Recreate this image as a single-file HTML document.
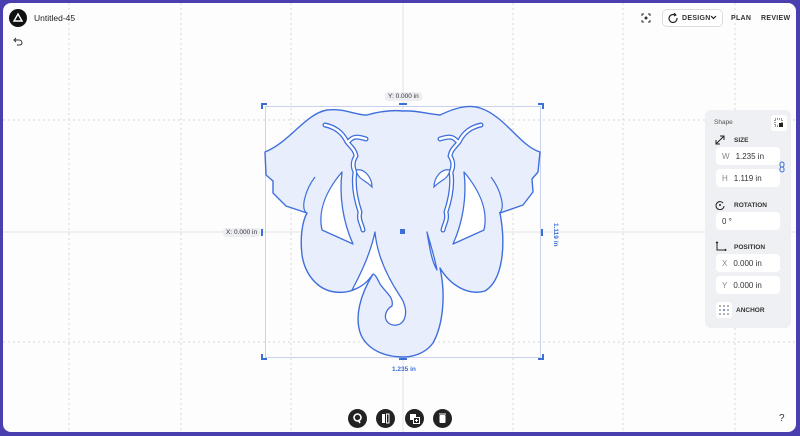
<!DOCTYPE html>
<html><head><style>
*{margin:0;padding:0;box-sizing:border-box}
body{width:800px;height:436px;overflow:hidden;background:#4a3fae;font-family:"Liberation Sans",sans-serif;position:relative}
#p{position:absolute;left:3px;top:3px;width:793px;height:429px;background:#fdfdfd;border-radius:8px;overflow:hidden}
.a{position:absolute}
.t{font-size:7px;font-weight:bold;color:#333;letter-spacing:.3px}
.panel{left:702px;top:107px;width:86px;height:218px;background:#eef0f3;border-radius:6px}
.in{position:absolute;left:11px;width:64px;height:18px;background:#fff;border-radius:4px;font-size:8px;color:#333;padding:5px 0 0 6px}
.in b{font-weight:normal;color:#888;margin-right:6px}
.lb{position:absolute;left:29px;font-size:6.5px;font-weight:bold;color:#333}
.btn{position:absolute;top:406px;width:19px;height:19px;border-radius:50%;background:#222}
</style></head><body>
<div id="p">
<svg class="a" style="left:0;top:0" width="793" height="429">
<g stroke="#d8d8d8" stroke-width="1" stroke-dasharray="2 3">
<line x1="66" y1="0" x2="66" y2="429"/><line x1="178" y1="0" x2="178" y2="429"/><line x1="288" y1="0" x2="288" y2="429"/><line x1="510" y1="0" x2="510" y2="429"/><line x1="620" y1="0" x2="620" y2="429"/><line x1="732" y1="0" x2="732" y2="429"/>
<line x1="0" y1="117" x2="793" y2="117"/><line x1="0" y1="339" x2="793" y2="339"/>
</g>
<g stroke="#e4e4e4"><line x1="400" y1="0" x2="400" y2="429"/><line x1="0" y1="229" x2="793" y2="229"/></g>
</svg>
<svg class="a" style="left:-3px;top:-3px" width="800" height="436">
<rect x="265.5" y="106.5" width="275" height="251" fill="none" stroke="#c9d3ef" stroke-width="1"/>
<g stroke="#3b6fd8" stroke-width="2" fill="none">
<path d="M262,109V104h5M538,104h5v5M262,354v5h5M538,359h5v-5"/>
<path d="M399,104h8M399,359h8M262,229v7M542,229v7"/>
</g>
<g fill="#e9eefc" stroke="#3f6fdc" stroke-width="1.4" stroke-linejoin="round">
<path d="M265,152 C290,142 305,114 327,110 C345,108 358,116 367,115 C380,111 395,110 403,111 C415,110 428,114 440,115 C455,108 468,104 480,108 C505,116 520,146 540,152 L538,172 L532,179 L533,192 L523,205 L500,213 C506,245 503,280 485,291 C468,296 450,285 440,268 C446,295 443,325 433,343 C425,354 412,357 403,357 C385,357 368,350 361,335 C354,318 360,295 373,274 C362,288 350,294 335,292 C318,290 305,275 302,255 C300,238 302,222 307,213 L286,206 L273,193 L273,181 L266,175 Z"/>
</g>
<g fill="#fff" stroke="#3f6fdc" stroke-width="1.3" stroke-linejoin="round">
<path d="M375,232 C377,255 388,278 400,296 C410,310 406,327 393,325 C383,323 383,311 392,306 C394,297 386,293 380,284 C377,278 375,274 373,274 C367,283 360,288 352,290 C360,275 370,255 375,232 Z"/>
<path d="M342,172 C325,192 318,212 322,230 L353,244 C343,222 339,196 342,172 Z"/>
<path d="M464,172 C481,192 488,212 484,230 L453,244 C463,222 467,196 464,172 Z"/>
<path d="M427,232 C430,250 432,262 437,270 C434,255 430,243 427,232 Z"/>
</g>
<g fill="none" stroke="#3f6fdc" stroke-width="1.2">
<path d="M315,177 C305,190 300,210 307,213"/>
<path d="M491,177 C501,190 506,210 499,213"/>
</g>
<g fill="none" stroke-linecap="round" stroke-linejoin="round">
<path d="M325,125 C340,128 345,138 347,142 C352,148 355,150 356,156 C352,162 353,168 355,172 C353,185 356,200 360,212 C358,220 362,224 363,230 M348,142 C352,138 354,135 366,139" stroke="#3f6fdc" stroke-width="5"/>
<path d="M325,125 C340,128 345,138 347,142 C352,148 355,150 356,156 C352,162 353,168 355,172 C353,185 356,200 360,212 C358,220 362,224 363,230 M348,142 C352,138 354,135 366,139" stroke="#fff" stroke-width="2.4"/>
<path d="M481,125 C466,128 461,138 459,142 C454,148 451,150 450,156 C454,162 453,168 451,172 C453,185 450,200 446,212 C448,220 444,224 443,230 M458,142 C454,138 452,135 440,139" stroke="#3f6fdc" stroke-width="5"/>
<path d="M481,125 C466,128 461,138 459,142 C454,148 451,150 450,156 C454,162 453,168 451,172 C453,185 450,200 446,212 C448,220 444,224 443,230 M458,142 C454,138 452,135 440,139" stroke="#fff" stroke-width="2.4"/>
</g>
<g fill="#fff" stroke="#3f6fdc" stroke-width="1.2">
<path d="M356,170 C365,168 372,178 372,187 C366,180 358,180 356,170Z"/>
<path d="M450,170 C441,168 434,178 434,187 C440,180 448,180 450,170Z"/>
</g>
<rect x="400" y="229" width="5" height="5" fill="#3b6fd8"/>
</svg>
<div class="a" style="left:382px;top:89px;background:#eceef2;border-radius:3px;font-size:6.5px;color:#333;padding:1px 3px">Y: 0.000 in</div>
<div class="a" style="left:220px;top:225px;background:#eceef2;border-radius:3px;font-size:6.5px;color:#333;padding:1px 3px">X: 0.000 in</div>
<div class="a" style="left:389px;top:363px;font-size:6.5px;color:#3b6fd8;font-weight:bold">1.235 in</div>
<div class="a" style="font-size:6.5px;color:#3b6fd8;font-weight:bold;transform:rotate(90deg);transform-origin:0 0;left:556px;top:220px">1.119 in</div>

<div class="a" style="left:6px;top:6px;width:18px;height:18px;border-radius:50%;background:#111"><svg width="18" height="18"><path d="M9,5 L13,12 H5 Z" fill="none" stroke="#fff" stroke-width="1.4"/></svg></div>
<div class="a" style="left:31px;top:10px;font-size:8.5px;color:#222">Untitled-45</div>
<svg class="a" style="left:10px;top:33px" width="10" height="10"><path d="M3,2 L1,4 L3,6 M1,4 H6 C8,4 9,5.5 9,7 C9,8.5 8,9 6,9 H4" fill="none" stroke="#333" stroke-width="1"/></svg>
<svg class="a" style="left:638px;top:10px" width="10" height="10"><path d="M1,3V1h2M7,1h2v2M1,7v2h2M7,9h2V7" stroke="#333" fill="none"/><circle cx="5" cy="5" r="1.5" fill="#333"/></svg>
<div class="a" style="left:659px;top:6px;width:61px;height:18px;border:1px solid #ddd;border-radius:5px;background:#fff"></div>
<svg class="a" style="left:665px;top:10px" width="10" height="10"><path d="M7,2 A4,4 0 1 0 9,5" fill="none" stroke="#222" stroke-width="1.2"/><path d="M6,0 L8,2 L6,3" fill="none" stroke="#222"/></svg>
<div class="a t" style="left:679px;top:12px">DESIGN</div>
<svg class="a" style="left:707px;top:12px" width="7" height="5"><path d="M1,1 L3.5,3.5 L6,1" stroke="#222" fill="none" stroke-width="1.2"/></svg>
<div class="a t" style="left:728px;top:12px">PLAN</div>
<div class="a t" style="left:758px;top:12px">REVIEW</div>

<div class="a panel">
<div class="a" style="left:9px;top:9px;font-size:6.5px;color:#555">Shape</div>
<div class="a" style="left:66px;top:5px;width:16px;height:16px;background:#fff;border-radius:3px"><svg width="16" height="16"><rect x="4" y="4" width="7" height="7" fill="none" stroke="#333" stroke-dasharray="1 1"/><rect x="8" y="8" width="4" height="4" fill="#222"/></svg></div>
<svg class="a" style="left:10px;top:25px" width="10" height="10"><path d="M1,9 L9,1 M1,5V9H5M5,1H9V5" stroke="#222" fill="none"/></svg>
<div class="lb" style="top:27px">SIZE</div>
<div class="in" style="top:37px"><b>W</b>1.235 in</div>
<div class="in" style="top:59px"><b>H</b>1.119 in</div>
<svg class="a" style="left:73px;top:51px" width="8" height="12"><rect x="2" y="1" width="4" height="5" rx="2" fill="none" stroke="#3b6fd8"/><rect x="2" y="6" width="4" height="5" rx="2" fill="none" stroke="#3b6fd8"/></svg>
<svg class="a" style="left:10px;top:90px" width="10" height="10"><path d="M8,3 A4,4 0 1 0 9,6" fill="none" stroke="#222"/><circle cx="5" cy="5" r="1" fill="#222"/></svg>
<div class="lb" style="top:92px">ROTATION</div>
<div class="in" style="top:102px">0 °</div>
<svg class="a" style="left:10px;top:131px" width="12" height="10"><path d="M2,1V9H11 M1,2L2,1L3,2 M10,8L11,9L10,10" stroke="#222" fill="none"/></svg>
<div class="lb" style="top:134px">POSITION</div>
<div class="in" style="top:144px"><b>X</b>0.000 in</div>
<div class="in" style="top:166px"><b>Y</b>0.000 in</div>
<div class="a" style="left:11px;top:192px;width:16px;height:16px;background:#fff;border-radius:3px"><svg width="16" height="16" fill="#555"><circle cx="4" cy="4" r=".8"/><circle cx="8" cy="4" r=".8"/><circle cx="12" cy="4" r=".8"/><circle cx="4" cy="8" r=".8"/><circle cx="8" cy="8" r="1" fill="#3b6fd8"/><circle cx="12" cy="8" r=".8"/><circle cx="4" cy="12" r=".8"/><circle cx="8" cy="12" r=".8"/><circle cx="12" cy="12" r=".8"/></svg></div>
<div class="lb" style="top:197px;left:31px">ANCHOR</div>
</div>

<div class="btn" style="left:345px"><svg width="19" height="19"><circle cx="9.5" cy="8.5" r="3.5" fill="none" stroke="#fff" stroke-width="1.6"/><path d="M10,11 L12,14" stroke="#fff" stroke-width="1.6"/></svg></div>
<div class="btn" style="left:373px"><svg width="19" height="19"><rect x="6" y="5" width="3" height="9" fill="#fff"/><rect x="10.5" y="5" width="2.5" height="9" fill="none" stroke="#fff"/></svg></div>
<div class="btn" style="left:402px"><svg width="19" height="19"><rect x="5" y="5" width="6" height="6" fill="#fff"/><rect x="8.5" y="8.5" width="6" height="6" fill="#222" stroke="#fff"/><path d="M11.5,10v3M10,11.5h3" stroke="#fff"/></svg></div>
<div class="btn" style="left:430px"><svg width="19" height="19"><rect x="6.5" y="6" width="6" height="8" rx="1" fill="#fff"/><rect x="6" y="4.5" width="7" height="1" fill="#fff"/></svg></div>
<div class="a" style="left:776px;top:410px;font-size:10px;color:#333">?</div>
</div>
</body></html>
